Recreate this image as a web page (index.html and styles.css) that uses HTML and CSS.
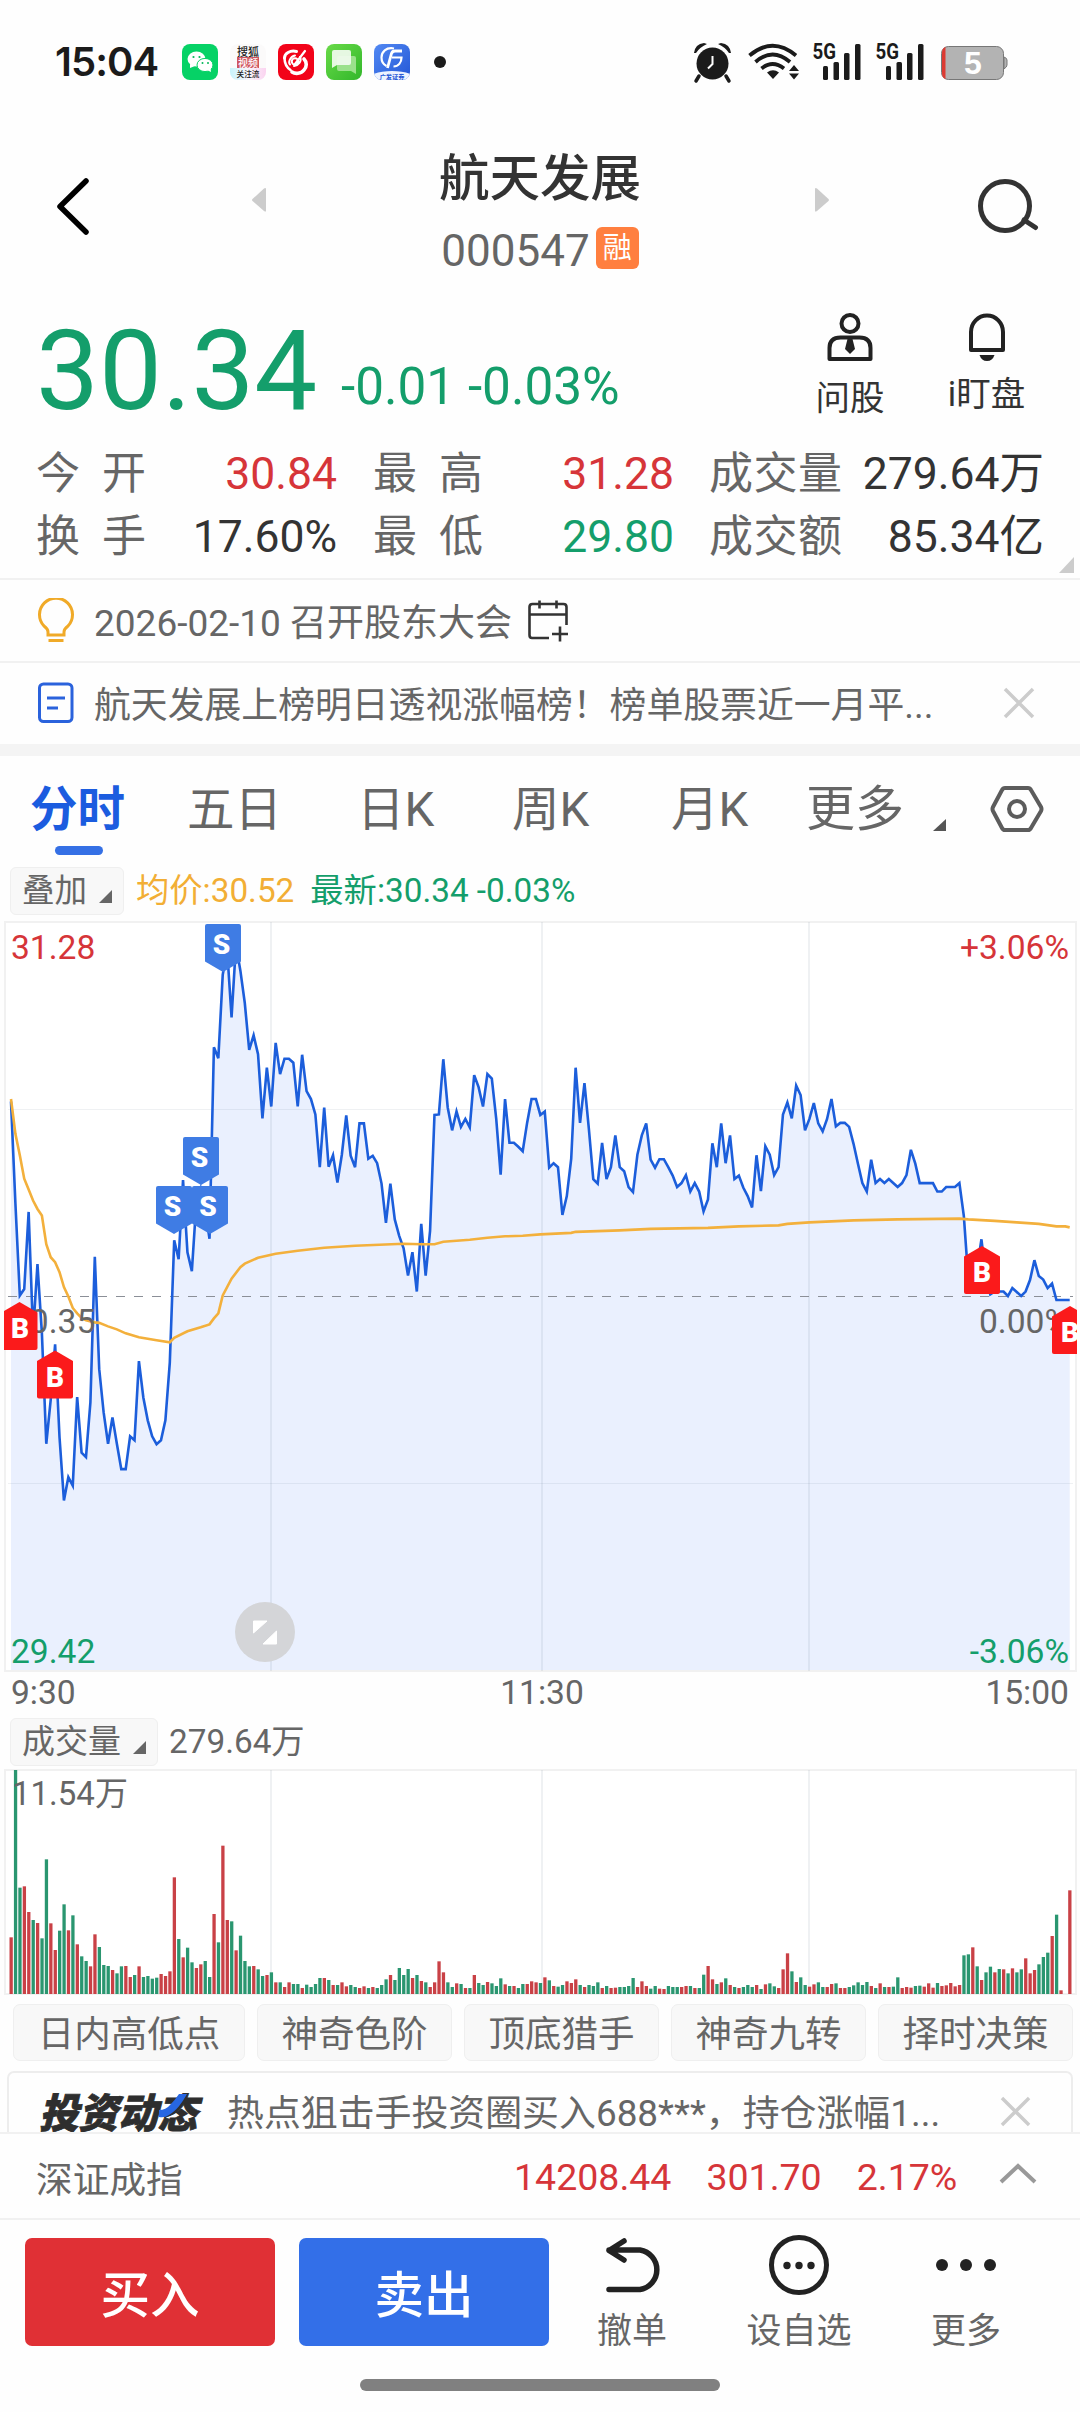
FILE: index.html
```html
<!DOCTYPE html>
<html lang="zh-CN">
<head>
<meta charset="utf-8">
<title>航天发展 000547</title>
<link rel="stylesheet" href="styles.css">
</head>
<body>
<div class="app">
  <div class="status">
    <span class="clock">15:04</span>
    <div class="apps">
      <svg width="36" height="36" viewBox="0 0 36 36"><rect width="36" height="36" rx="8" fill="#06d266"/><ellipse cx="14.500" cy="15" rx="9" ry="7.500" fill="#fff"/><path d="M8 20l0 4 5-2z" fill="#fff"/><ellipse cx="23" cy="21" rx="8" ry="6.600" fill="#fff" stroke="#06d266" stroke-width="1"/><path d="M25 26l4 2-.5-4z" fill="#fff"/><g fill="#06b95a"><circle cx="11.500" cy="13" r="1.100"/><circle cx="17.500" cy="13" r="1.100"/><circle cx="20.500" cy="19" r="1"/><circle cx="26" cy="19" r="1"/></g></svg>
      <svg width="36" height="36" viewBox="0 0 36 36"><defs><linearGradient id="sohu"><stop offset="0" stop-color="#c8f4fb"/><stop offset=".5" stop-color="#f8f6fb"/><stop offset="1" stop-color="#fbd3f0"/></linearGradient></defs><rect width="36" height="36" rx="8" fill="#fbfafa"/><path d="M0 24h36v4a8 8 0 0 1-8 8H8a8 8 0 0 1-8-8z" fill="url(#sohu)"/><rect x="7" y="13" width="22" height="11" fill="#cf5560"/><g text-anchor="middle" font-weight="500"><text x="18" y="12" font-size="11" fill="#222">搜狐</text><text x="18" y="22.500" font-size="10" fill="#fff">视频</text><text x="18" y="33" font-size="7.600" fill="#222">关注流</text></g></svg>
      <svg width="36" height="36" viewBox="0 0 36 36"><rect width="36" height="36" rx="8" fill="#f20319"/><g fill="none" stroke="#fff" stroke-linecap="round"><path d="M18.500 7.500C12 6 6.500 9.500 6.500 14" stroke-width="3"/><path d="M6.500 14c0 6 3 10 6 12" stroke-width="2.500"/><path d="M17 11.500c-5 1-7 7-5 9" stroke-width="2"/><path d="M27 7L17 20" stroke-width="2.200"/><circle cx="17" cy="17.500" r="3.200" stroke-width="2"/><path d="M22 13c2 4-1 8-6 9" stroke-width="2"/><path d="M26 15c3 3 3 8 0 11-3 4-9 4-12 2" stroke-width="3.600"/></g></svg>
      <svg width="36" height="36" viewBox="0 0 36 36"><defs><linearGradient id="msg" x2="1" y2="1"><stop offset="0" stop-color="#69da48"/><stop offset="1" stop-color="#32b72b"/></linearGradient></defs><rect width="36" height="36" rx="8" fill="url(#msg)"/><path d="M13 12h15a2 2 0 0 1 2 2v16l-5-3H13a2 2 0 0 1-2-2V14a2 2 0 0 1 2-2z" fill="#9be18c"/><path d="M8 6h15a2 2 0 0 1 2 2v11a2 2 0 0 1-2 2H11l-5 3V8a2 2 0 0 1 2-2z" fill="#f1fbef" fill-opacity=".93"/></svg>
      <svg width="36" height="36" viewBox="0 0 36 36"><defs><linearGradient id="gf" x2="1" y2="1"><stop offset="0" stop-color="#5289f3"/><stop offset="1" stop-color="#2457d6"/></linearGradient><clipPath id="gfc"><rect width="36" height="36" rx="8"/></clipPath></defs><g clip-path="url(#gfc)"><rect width="36" height="36" fill="url(#gf)"/><ellipse cx="18" cy="36" rx="25" ry="9" fill="#eef4ff"/></g><g fill="none" stroke="#fff" stroke-width="2.200"><path d="M20 4.500C12 3 7.500 8 7.500 13.500c0 4 2 7 5 8.500"/><path d="M13.500 24L17.500 9.500Q18.300 7 21 7h7" stroke-width="2.800"/><path d="M18 13.500h9.500c0 5-3 9-8 9"/></g><text x="18" y="34.500" font-size="6.200" font-weight="700" fill="#2457d6" text-anchor="middle">广发证券</text></svg>
    </div>
    <span class="more-dot"></span>
    <svg class="sys" width="320" height="44" viewBox="690 40 320 44" fill="#1b1b1b">
      <circle cx="712.500" cy="63.500" r="16"/><path d="M699 76l-3 5M726 76l3 5" stroke="#1b1b1b" stroke-width="3.500" stroke-linecap="round"/><path d="M694 53q1-9 10-10l3 1q-7 3-11 9zM731 53q-1-9-10-10l-3 1q7 3 11 9z"/><path d="M712.500 56v8l-4.500 4.500" fill="none" stroke="#fff" stroke-width="2"/>
      <g fill="none" stroke="#1b1b1b" stroke-width="3.800"><path d="M749.500 55.500q23-19.500 46.500 0M755.500 62q17-15 34.500 0M761.500 68.500q11-9 22.500 0"/></g><path d="M767 72.500q6-4.500 12 0L773 79zM794 65l5 6h-10zM794 79.500l-5-6h10z"/>
      <g id="signal"><text x="812.500" y="59" class="net" textLength="23.500" lengthAdjust="spacingAndGlyphs">5G</text><rect x="823" y="66" width="5" height="14" rx="1.500"/><rect x="833.500" y="62" width="5.500" height="18" rx="1.500"/><rect x="844" y="53" width="5.500" height="27" rx="1.500"/><rect x="855" y="44" width="5.500" height="36" rx="1.500"/></g><use href="#signal" x="63"/>
      <path d="M1004 57q3 1 3 3v5q0 2-3 4z" fill="#b3b3b3" stroke="#777"/><rect x="941.500" y="46.500" width="62" height="33" rx="7" fill="#b3b3b3" stroke="#777"/><path d="M945.500 47v32q-3.500-1-3.500-6V53q0-5 3.500-6z" fill="#dc3a32"/><text x="973" y="74" class="batt">5</text>
    </svg>
  </div>

  <header class="header">
    <svg width="40" height="64" viewBox="53 174 40 64"><path d="M86 181L60 206.500 86 232" fill="none" stroke="#000" stroke-width="5.500" stroke-linecap="round" stroke-linejoin="round"/></svg>
    <svg class="prev" width="16" height="26"><path d="M15 2v22q0 1-2 0L1.500 14q-1-1 0-2L13 1.500q2-1 2 .5z" fill="#ccc"/></svg>
    <div class="title"><h1>航天发展</h1><div class="code">000547<span class="badge">融</span></div></div>
    <svg class="next" width="16" height="26"><path d="M1 2v22q0 1 2 0l11.500-10q1-1 0-2L3 1.500q-2-1-2 .5z" fill="#ccc"/></svg>
    <svg class="search" width="64" height="64" viewBox="976 174 64 64" fill="none" stroke="#333" stroke-width="5"><circle cx="1005" cy="206" r="24.500"/><path d="M1024 220l11.500 7.500" stroke-linecap="round"/></svg>
  </header>

  <section class="quote">
    <div class="price">30.34</div>
    <div class="change">-0.01 -0.03%</div>
    <div class="tools">
      <div class="tool ask"><svg width="48" height="50" viewBox="826 312 48 50" fill="none" stroke="#222" stroke-width="4"><circle cx="850" cy="323.500" r="8.500"/><path d="M829.500 357.500V348q0-10.500 11-10.500h19q11 0 11 10.500v11h-41z" stroke-linejoin="round"/><path d="M847.500 339h5l2.500 10-5 5-5-5z" fill="#222" stroke="none"/></svg><span>问股</span></div>
      <div class="tool"><svg width="48" height="50" viewBox="963 312 48 50" fill="none" stroke="#222" stroke-width="4"><path d="M971 350v-18a16 16.500 0 0 1 32 0v18z" stroke-linejoin="round"/><path d="M979.500 355h15q-2 6-7.500 6t-7.500-6z" fill="#222" stroke="none"/></svg><span>i盯盘</span></div>
    </div>
  </section>

  <dl class="stats">
    <dt><i>今</i><i>开</i></dt><dd class="up">30.84</dd><dt><i>最</i><i>高</i></dt><dd class="up">31.28</dd><dt><i>成</i><i>交</i><i>量</i></dt><dd>279.64万</dd>
    <dt><i>换</i><i>手</i></dt><dd>17.60%</dd><dt><i>最</i><i>低</i></dt><dd class="down">29.80</dd><dt><i>成</i><i>交</i><i>额</i></dt><dd>85.34亿</dd>
    <svg class="corner" width="15" height="16"><path d="M15 0v16H0z" fill="#ccc"/></svg>
  </dl>

  <div class="notice">
    <svg width="40" height="46" viewBox="36 598 40 46" fill="none" stroke="#f0aa28" stroke-width="3"><path d="M48 635v-3q0-3-4-6a16.500 16.500 0 1 1 24 0q-4 3-4 6v3z"/><path d="M48.500 640.500h15"/></svg>
    <span>2026-02-10 召开股东大会</span>
    <svg class="cal" width="42" height="42" viewBox="527 600 42 42" fill="none" stroke="#333" stroke-width="2.600"><path d="M549 638h-17q-2.500 0-2.500-3v-28q0-3 3-3h31q3 0 3 3v18M530 614.500h36M539.500 600.500v8M556.500 600.500v8M552 634h16M560 626.500v15"/></svg>
  </div>
  <div class="notice second">
    <svg width="40" height="46" viewBox="36 680 40 46" fill="none" stroke="#2a62dc" stroke-width="3"><rect x="39.500" y="684" width="32.500" height="37.500" rx="4"/><path d="M47 698h18M47 708h11"/></svg>
    <span>航天发展上榜明日透视涨幅榜！榜单股票近一月平...</span>
    <svg class="close" width="33" height="32" viewBox="0 0 33 32"><path d="M2 2l28 28M30 2L2 30" stroke="#ccc" stroke-width="3.500"/></svg>
  </div>

  <nav class="tabs">
    <a class="on">分时</a><a>五日</a><a>日K</a><a>周K</a><a>月K</a><a>更多</a>
    <svg class="tri" width="14" height="14"><path d="M13 0v12H0z" fill="#555"/></svg>
    <svg class="hex" width="54" height="50" viewBox="0 0 54 50" fill="none" stroke="#5c5c5c" stroke-width="4"><path d="M15 4h23q2 0 3 2l10 17q1 2 0 4L41 44q-1 2-3 2H15q-2 0-3-2L3 27q-1-2 0-4L12 6q1-2 3-2z"/><circle cx="27" cy="25" r="8"/></svg>
  </nav>

  <div class="legend">
    <span class="pick">叠加<svg width="13" height="13"><path d="M13 0v13H0z" fill="#666"/></svg></span>
    <span class="avg">均价:30.52</span><span class="last">最新:30.34 -0.03%</span>
  </div>

  <svg class="chart" width="1080" height="796" viewBox="0 918 1080 796">
    <defs>
      <clipPath id="plot"><rect x="4" y="918" width="1073" height="756"/></clipPath>
      <path id="sell" d="M-16-24h32q2 0 2 2v35.500L0 24l-18-10.500V-22q0-2 2-2z" fill="#3f7ce4"/>
      <path id="buy" d="M-18-13.500L0-24l18 10.500V22q0 2-2 2h-32q-2 0-2-2z" fill="#fb1a1b"/>
    </defs>
    <g class="frame"><rect x="5" y="922" width="1071" height="749"/></g>
    <path id="area" fill="#eaf0fe"/>
    <g class="grid"><path d="M271 922v749M542 922v749M809 922v749" stroke-width="2"/><path d="M8 1109.500h1065M8 1483.500h1065" stroke-width="1"/></g>
    <path d="M8 1296.500h1065" stroke="#8b8f97" stroke-width="1" stroke-dasharray="9 9"/>
    <path id="line" class="price-line"/>
    <path id="average" class="avg-line"/>
    <g class="axis">
      <text x="11" y="959" class="up">31.28</text><text x="11" y="1333">30.35</text><text x="11" y="1663" class="down">29.42</text>
      <g text-anchor="end"><text x="1069" y="959" class="up">+3.06%</text><text x="1069" y="1333">0.00%</text><text x="1069" y="1663" class="down">-3.06%</text><text x="1069" y="1704">15:00</text></g>
      <text x="11" y="1704">9:30</text><text x="542" y="1704" text-anchor="middle">11:30</text>
    </g>
    <g class="marks" clip-path="url(#plot)">
      <use href="#sell" x="223" y="948"/><text x="221.500" y="954">S</text>
      <use href="#sell" x="174" y="1210"/><text x="172.500" y="1216">S</text>
      <use href="#sell" x="210" y="1210"/><text x="208" y="1216">S</text>
      <use href="#sell" x="201" y="1161"/><text x="199.500" y="1167">S</text>
      <use href="#buy" x="19.500" y="1326"/><text x="20" y="1338">B</text>
      <use href="#buy" x="55" y="1374.500"/><text x="55" y="1386.500">B</text>
      <use href="#buy" x="982" y="1270"/><text x="982" y="1282">B</text>
      <use href="#buy" x="1070" y="1330"/><text x="1070" y="1342">B</text>
    </g>
    <circle cx="265" cy="1632" r="30" fill="#d4d5d8"/><path d="M253.500 1621H267l-13.500 12zM276.500 1631v13H263z" fill="#fff" stroke="#fff" stroke-linejoin="round"/>
  </svg>

  <div class="legend volume-legend">
    <span class="pick">成交量<svg width="13" height="13"><path d="M13 0v13H0z" fill="#666"/></svg></span><span class="total">279.64万</span>
  </div>
  <svg class="volume" width="1080" height="230" viewBox="0 1768 1080 230">
    <g class="frame"><rect x="5" y="1770" width="1071" height="224"/></g><g class="grid"><path d="M271 1770v224M542 1770v224M809 1770v224" stroke-width="2"/></g>
    <g id="bars"></g>
    <text x="12" y="1805" class="vol-max">11.54万</text>
  </svg>

  <div class="chips"><span>日内高低点</span><span>神奇色阶</span><span>顶底猎手</span><span>神奇九转</span><span>择时决策</span></div>

  <div class="feed"><div class="card">
    <svg class="brand" width="170" height="50"><text x="3" y="35" textLength="158" lengthAdjust="spacingAndGlyphs">投资动态</text><path d="M143 1h8C146 10 140 18 133 22q-4 3-10 2v-7q7 0 11-5 5-5 9-11z" fill="#2766e2"/></svg>
    <span>热点狙击手投资圈买入688***，持仓涨幅1...</span>
    <svg class="close" width="32" height="31" viewBox="0 0 33 32"><path d="M2 2l28 28M30 2L2 30" stroke="#ccc" stroke-width="3.500"/></svg>
  </div></div>

  <div class="index">
    <span class="name">深证成指</span><span>14208.44</span><span>301.70</span><span>2.17%</span>
    <svg width="38" height="24" fill="none" stroke="#999" stroke-width="4"><path d="M2 20L19 4l17 16"/></svg>
  </div>

  <footer class="actions">
    <button class="buy">买入</button><button class="sell">卖出</button>
    <div class="act a1"><svg width="66" height="62" viewBox="598 2234 66 62" fill="none" stroke="#222" stroke-width="5.500" stroke-linecap="round" stroke-linejoin="round"><path d="M623 2241l-15 9.500 15 9.500M608 2250h31a20 20 0 0 1 0 39.500h-31"/></svg><span>撤单</span></div>
    <div class="act a2"><svg width="66" height="62" viewBox="766 2234 66 62"><circle cx="799" cy="2265" r="27.500" fill="none" stroke="#222" stroke-width="5"/><g fill="#222"><circle cx="787" cy="2265.500" r="3.700"/><circle cx="799" cy="2265.500" r="3.700"/><circle cx="811" cy="2265.500" r="3.700"/></g></svg><span>设自选</span></div>
    <div class="act a3"><svg width="66" height="62" viewBox="933 2234 66 62" fill="#222"><circle cx="942" cy="2265" r="6"/><circle cx="966" cy="2265" r="6"/><circle cx="990" cy="2265" r="6"/></svg><span>更多</span></div>
  </footer>
  <div class="home"></div>
</div>
<script src="chart.js"></script>
</body>
</html>
```
FILE: styles.css
```css
* { box-sizing: border-box; margin: 0; padding: 0; }
body { width: 1080px; height: 2412px; background: #fefefe; color: #666; font-family: Roboto, "Noto Sans CJK SC", sans-serif; overflow: hidden; }
svg { display: block; flex: none; }
svg text { font-family: Roboto, "Noto Sans CJK SC", sans-serif; }
i { font-style: normal; }
.app { display: flex; flex-direction: column; height: 2412px; white-space: nowrap; }
.up { color: #d63539; fill: #d63539; }
.down { color: #149e6b; fill: #149e6b; }

.status { height: 124px; display: flex; align-items: center; padding-left: 55px; }
.clock { width: 127px; font: 600 40px/48px Inter, sans-serif; color: #1b1b1b; letter-spacing: -.9px; }
.apps { display: flex; gap: 12px; }
.more-dot { width: 12px; height: 12px; border-radius: 50%; background: #1b1b1b; margin-left: 24px; }
.sys { margin-left: 244px; }
.sys .net { font: 700 22px Roboto, sans-serif; }
.sys .batt { font: 700 32px "Liberation Sans", sans-serif; fill: #fff; text-anchor: middle; }

.header { height: 166px; display: flex; align-items: center; padding: 0 40px 0 53px; }
.header svg { margin-top: -2px; }
.header .prev { margin: -14px 0 0 158px; }
.header .next { margin-top: -14px; margin-left: 1px; }
.title { width: 548px; text-align: center; }
.title h1 { font-size: 50.500px; font-weight: 500; line-height: 64px; color: #333; margin-top: 16px; }
.code { display: flex; justify-content: center; align-items: center; gap: 6px; font-size: 44px; line-height: 64px; margin-top: 8px; }
.badge { width: 43px; height: 42px; margin-top: -6px; border-radius: 6px; background: #ff7f3f; color: #fff; font-size: 29px; line-height: 43px; }
.header .search { margin-left: 146px; }

.quote { height: 148px; display: flex; align-items: flex-start; padding-left: 36px; color: #149e6b; }
.price { width: 305px; font-size: 112px; line-height: 132px; margin-top: 15px; }
.change { width: 473px; font-size: 51.300px; line-height: 60px; margin-top: 67px; }
.tools { display: flex; width: 266px; padding-top: 22px; }
.tool { width: 137px; display: flex; flex-direction: column; align-items: center; font-size: 34.500px; line-height: 40px; color: #333; }
.tool.ask { width: 72px; margin-right: 32px; }
.tool span { margin-top: 12px; }
.tool.ask span { margin-top: 16px; }

.stats { position: relative; height: 142px; border-bottom: 2px solid #f1f1f1; padding: 5px 36px 0; display: grid; grid-template-columns: 110px 191px 36px 110px 191px 35px 133px 202px; grid-auto-rows: 63px; font-size: 44.500px; line-height: 63px; }
.stats dt { display: flex; justify-content: space-between; font-size: 44px; }
.stats dt:nth-of-type(3n+1) { grid-column: 1; }
.stats dt:nth-of-type(3n+2) { grid-column: 4; }
.stats dt:nth-of-type(3n) { grid-column: 7; }
.stats dd { text-align: right; color: #333; }
.stats dd.up { color: #d63539; }
.stats dd.down { color: #149e6b; }
.corner { position: absolute; right: 6px; bottom: 5px; }

.notice { height: 83px; border-bottom: 2px solid #f1f1f1; display: flex; align-items: center; padding-left: 36px; font-size: 37px; }
.notice span { margin: -2px 0 0 18px; }
.cal { margin-left: 15px; }
.notice.second { height: 93px; border-bottom: 12px solid #f4f4f4; }
.notice.second span { width: 909px; font-size: 36.850px; margin-top: -3px; }
.notice.second svg { margin-top: -2px; }

.tabs { height: 108px; display: flex; align-items: center; padding-left: 30px; font-size: 47.500px; line-height: 106px; position: relative; }
.tabs a { width: 153px; }
.tabs a:nth-child(1) { width: 157px; color: #1b5cdf; font-weight: 700; }
.tabs a:nth-child(2) { width: 170px; }
.tabs a:nth-child(3) { width: 155px; }
.tabs a:nth-child(4) { width: 159px; }
.tabs a:nth-child(5) { width: 135px; }
.tabs a:nth-child(6) { width: 127px; font-size: 49px; }
.tabs .on::after { content: ""; position: absolute; left: 55px; top: 90px; width: 48px; height: 9px; border-radius: 4.500px; background: #3570e5; }
.tri { margin-top: 32px; }
.hex { margin-left: 43px; margin-top: -3px; }

.legend { height: 54px; display: flex; align-items: center; padding-left: 10px; font-size: 33.300px; line-height: 46px; }
.pick { display: flex; align-items: center; gap: 12px; height: 48px; border: 1px solid #efefef; background: #f8f8f8; border-radius: 6px; padding: 0 11px; font-size: 32.500px; }
.pick svg { margin-top: 10px; }
.avg { margin-left: 12px; color: #f2ae35; }
.last { margin-left: 16px; color: #149e6b; }
.volume-legend { padding-top: 2px; }
.volume-legend .pick { font-size: 33px; }
.total { margin-left: 11px; }
.frame rect { fill: #fff; stroke: #f1f1f1; stroke-width: 2; }
.grid { stroke: #50607c; stroke-opacity: .09; fill: none; }
.price-line { fill: none; stroke: #1c5edb; stroke-width: 2.600; }
.avg-line { fill: none; stroke: #f3b03c; stroke-width: 2.600; }
.axis { font-size: 33.600px; fill: #666; }
.marks text { font: 900 28px Roboto, sans-serif; fill: #fff; text-anchor: middle; }
.vol-max { font-size: 33px; fill: #666; }
.vup { fill: #c94146; }
.vdown { fill: #2a9670; }

.chips { display: flex; gap: 12px; padding: 6px 7px 0 13px; height: 73px; }
.chips span { width: 195px; height: 57px; text-align: center; border: 1px solid #efefef; border-radius: 7px; background: #f8f8f8; font-size: 36.500px; line-height: 60px; }
.chips span:first-child { width: 232px; }
.feed { height: 61px; overflow: hidden; padding: 0 7px; }
.card { height: 100px; border: 2px solid #ededed; border-radius: 7px; display: flex; align-items: flex-start; padding-left: 27px; font-size: 36.900px; line-height: 82px; }
.card span { width: 773px; margin-left: 21px; }
.brand { margin-top: 20px; }
.brand text { font-size: 41px; font-weight: 900; font-style: italic; fill: #2e2e2e; stroke: #2e2e2e; stroke-width: .8px; }
.card .close { margin-top: 23px; }

.index { height: 88px; border: solid #f1f1f1; border-width: 2px 0; display: flex; align-items: center; gap: 35px; padding: 2px 0 0 36px; font-size: 37.500px; color: #d63539; }
.index .name { width: 443px; color: #666; font-size: 36.700px; }
.index svg { margin-left: 7px; margin-top: -6px; }

.actions { display: flex; height: 140px; padding: 18px 0 0 25px; }
.actions button { width: 250px; height: 108px; border: 0; border-radius: 7px; color: #fff; font: 500 49.500px/112px Roboto, "Noto Sans CJK SC", sans-serif; padding-top: 2px; margin-right: 24px; }
.buy { background: #e03035; }
.sell { background: #336fe8; }
.actions button.sell { margin-right: 26px; }
.act { width: 114px; margin-top: -4px; display: flex; flex-direction: column; align-items: center; font-size: 35px; line-height: 48px; }
.act span { margin-top: 12px; }
.a2 { margin-left: 53px; }
.a3 { margin-left: 53px; }
.home { width: 360px; height: 12px; border-radius: 6px; background: #808080; margin: 19px auto 0; }
```
FILE: chart.js
```js
// One sample per trading minute, in plot units measured down from the frame (24 = top, 1529 = bottom).
const price = [
  385,590,775,762,607,850,712,850,1073,985,873,1060,1187,1140,1157,979,1091,1100,990,697,
  923,1010,1073,1020,1073,1124,1124,1058,1066,907,980,1026,1058,1074,1066,1026,910,664,702,543,
  688,726,590,560,600,661,276,298,130,80,216,70,122,187,281,252,290,419,317,395,
  267,330,299,299,307,395,291,364,380,411,517,397,516,493,548,492,413,494,517,429,
  429,500,494,509,550,629,550,622,655,680,735,688,767,631,735,645,412,411,300,397,
  443,405,436,420,437,332,356,395,330,339,420,532,380,468,468,476,485,428,380,380,
  412,405,518,509,517,613,575,500,317,428,348,440,541,550,468,541,517,453,517,525,
  557,567,492,453,429,502,518,501,501,517,534,557,549,533,566,549,566,606,582,469,
  517,429,509,453,541,534,558,575,598,493,565,475,492,533,517,411,387,419,353,372,
  443,420,388,429,445,420,380,435,428,428,436,470,510,549,566,502,549,541,549,541,
  549,557,549,533,482,510,549,549,549,549,566,566,557,557,557,549,615,740,740,720,
  662,740,773,767,767,767,776,760,768,776,767,744,704,736,743,760,751,784,784,784,784
];
// [minute, level] pairs of the running average.
const average = [
  [0,380],[1,450],[2,493],[3,540],[4,562],[5,584],[6,601],[7,614],[8,672],[9,698],[10,708],[11,728],[12,758],[13,777],[14,800],
  [15,811],[16,820],[17,825],[19,829],[20,830],[22,837],[24,843],[26,851],[29,859],[33,865],[36,869],[37,860],[40,847],[43,839],
  [45,833],[46,821],[47,811],[48,775],[50,741],[52,718],[53,711],[56,699],[60,691],[65,685],[71,679],[78,675],[89,671],[93,672],
  [96,672],[98,667],[104,663],[108,659],[112,656],[116,655],[120,652],[127,649],[128,647],[138,644],[145,641],[158,639],[165,636],
  [174,634],[176,631],[181,628],[191,624],[201,622],[215,620.5],[217,622],[223,625],[228,628],[233,631],[237,636],[239,636],[240,638]
];
// Volume per minute: r = up, g = down; number is the bar top (912 = baseline, 240 = frame top).
const volume = `r742 g240 g593 r589 r666 g690 r699 g745 g508 r700 r780 g722 g643 r721 g676 r763 g799 g813 r829 r733
g771 g825 g828 r840 g850 g829 r828 r861 g855 r829 g861 g858 g866 g863 r852 r858 r844 r562 g747 r802
g773 g817 r834 r823 g813 g861 r672 g757 r467 r690 g694 r781 g737 g813 g829 r828 g838 g858 r855 g847
r877 g877 r891 r877 g882 g882 r894 g884 g891 g882 g864 r864 g870 r885 g885 r877 r889 g885 g891 r894
r889 g894 r891 g894 g885 g868 r855 g870 g834 g855 g837 r864 g855 r873 g877 r891 r877 r814 r847 g877
g891 r880 g882 r894 g894 r855 g879 g885 r876 g880 g888 g865 r883 g888 r888 g894 g882 r882 r874 r877
g879 r862 g871 r888 g890 g885 r874 r879 r868 g885 r891 g885 g888 g877 r894 g888 r894 r893 g891 g891
g888 g864 r891 r874 r888 g896 g888 r896 r897 g888 g891 g891 r891 r888 g888 r894 g894 g854 r828 r868
g882 r877 g865 r885 g891 r894 g891 g885 g891 r885 g897 r883 g880 g889 r894 r838 r790 g844 r876 g862
g885 r890 r883 g877 g891 r891 r882 g880 r894 r894 g891 g886 g877 g885 g876 r888 g894 r880 g891 r891
g890 g862 r894 r891 r893 g888 g887 r890 r880 r893 g879 r888 r886 r879 r889 r885 g796 g793 r772 g829
r870 g847 g830 r847 g837 r838 g850 r835 g847 g838 r805 r850 r840 g823 g801 g788 r738 g674 r901 r912 r601`.split(/\s+/);

const x = i => (11 + i * 4.4112).toFixed(2);
const y = v => (910 + v / 2.0103).toFixed(2);
const path = pts => 'M' + pts.map(([i, v]) => x(i) + ' ' + y(v)).join('L');

const line = path(price.map((v, i) => [i, v]));
document.getElementById('line').setAttribute('d', line);
document.getElementById('area').setAttribute('d', line + 'V1670H11Z');
document.getElementById('average').setAttribute('d', path(average));

document.getElementById('bars').innerHTML = volume.map((v, i) => {
  const h = (912 - Number(v.slice(1))) / 3;
  return `<rect class="${v[0] === 'r' ? 'vup' : 'vdown'}" x="${x(i) - 1.5}" y="${1994 - h}" width="3.3" height="${h}"/>`;
}).join('');
```
